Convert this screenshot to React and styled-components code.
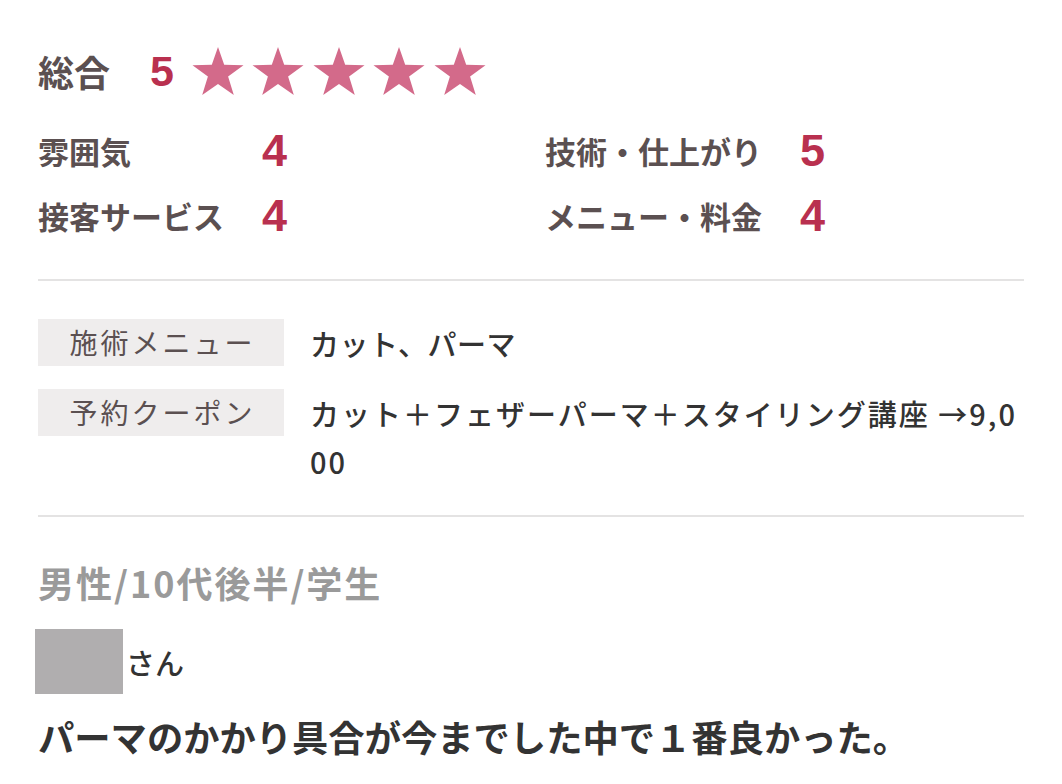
import React from "react";
import styled, { createGlobalStyle } from "styled-components";

const Global = createGlobalStyle`
  html, body { margin: 0; padding: 0; background: #fff; }
  body { font-family: "Noto Sans CJK JP", "Noto Sans", sans-serif; }
`;

const Page = styled.div`
  width: 986px;
  padding: 40px 38px 0;
`;

const TotalRow = styled.div`
  display: flex;
  align-items: center;
  height: 62px;
`;

const TotalLabel = styled.span`
  font-size: 36px;
  font-weight: 700;
  color: #5b5051;
  line-height: 1;
  width: 112px;
`;

const Score = styled.span`
  font-family: "Liberation Sans", Arial, sans-serif;
  font-weight: 700;
  font-size: ${(p) => p.$size || 45}px;
  color: #b9304f;
  line-height: 1;
`;

const Stars = styled.div`
  display: flex;
  gap: 8.5px;
  margin-left: 18px;
`;

const SubGrid = styled.div`
  display: grid;
  grid-template-columns: 507px 1fr;
  margin-top: 16px;
`;

const SubItem = styled.div`
  display: flex;
  align-items: center;
  height: 65px;
`;

const SubLabel = styled.span`
  width: ${(p) => p.$w}px;
  font-size: 31px;
  font-weight: 700;
  color: #5b5051;
  line-height: 1;
  white-space: nowrap;
`;

const Divider = styled.hr`
  border: 0;
  height: 2px;
  background: #e4e3e3;
  margin: ${(p) => p.$m};
`;

const InfoTable = styled.div`
  display: flex;
  flex-direction: column;
  gap: 22px;
`;

const InfoRow = styled.div`
  display: flex;
  align-items: flex-start;
  gap: 26px;
`;

const InfoLabel = styled.div`
  flex: 0 0 246px;
  height: 47px;
  line-height: 47px;
  background: #efeded;
  color: #5b5051;
  font-size: 28px;
  letter-spacing: 3px;
  text-indent: 3px;
  text-align: center;
`;

const InfoValue = styled.div`
  flex: 1;
  font-size: 29px;
  font-weight: 500;
  color: #333;
  line-height: 48px;
  letter-spacing: ${(p) => p.$spacing || 0}px;
  word-break: break-all;
  line-break: anywhere;
`;

const Profile = styled.div`
  margin-top: 40px;
  font-size: 36px;
  font-weight: 700;
  color: #9a9a9a;
  line-height: 50px;
  letter-spacing: 2px;
`;

const NameRow = styled.div`
  display: flex;
  align-items: center;
  margin-top: 22px;
  margin-left: -3px;
`;

const NameMask = styled.div`
  width: 88px;
  height: 65px;
  background: #b0aeaf;
`;

const Honorific = styled.span`
  font-size: 29px;
  font-weight: 500;
  color: #333;
  margin-left: 3px;
`;

const Comment = styled.div`
  margin-top: 17px;
  font-size: 36.3px;
  font-weight: 700;
  color: #333;
  line-height: 50px;
  white-space: nowrap;
`;

const Star = () => (
  <svg width="52" height="48" viewBox="0 0 52 48">
    <polygon
      fill="#d36a8a"
      points="26,0 32.2,17.8 51.5,18.2 36.1,29.6 41.8,48 26,37.1 10.2,48 15.9,29.6 0.5,18.2 19.8,17.8"
    />
  </svg>
);

const subs = [
  { label: "雰囲気", w: 224, score: 4 },
  { label: "技術・仕上がり", w: 255, score: 5 },
  { label: "接客サービス", w: 224, score: 4 },
  { label: "メニュー・料金", w: 255, score: 4 },
];

export default function App() {
  return (
    <>
      <Global />
      <Page>
        <TotalRow>
          <TotalLabel>総合</TotalLabel>
          <Score $size={43}>5</Score>
          <Stars>
            {[0, 1, 2, 3, 4].map((i) => (
              <Star key={i} />
            ))}
          </Stars>
        </TotalRow>
        <SubGrid>
          {subs.map((s) => (
            <SubItem key={s.label}>
              <SubLabel $w={s.w}>{s.label}</SubLabel>
              <Score>{s.score}</Score>
            </SubItem>
          ))}
        </SubGrid>
        <Divider $m="31px 0 38px" />
        <InfoTable>
          <InfoRow>
            <InfoLabel>施術メニュー</InfoLabel>
            <InfoValue $spacing={0.5}>カット、パーマ</InfoValue>
          </InfoRow>
          <InfoRow>
            <InfoLabel>予約クーポン</InfoLabel>
            <InfoValue $spacing={2}>カット＋フェザーパーマ＋スタイリング講座 →9,000</InfoValue>
          </InfoRow>
        </InfoTable>
        <Divider $m="30px 0 0" />
        <Profile>男性/10代後半/学生</Profile>
        <NameRow>
          <NameMask />
          <Honorific>さん</Honorific>
        </NameRow>
        <Comment>パーマのかかり具合が今までした中で１番良かった。</Comment>
      </Page>
    </>
  );
}
